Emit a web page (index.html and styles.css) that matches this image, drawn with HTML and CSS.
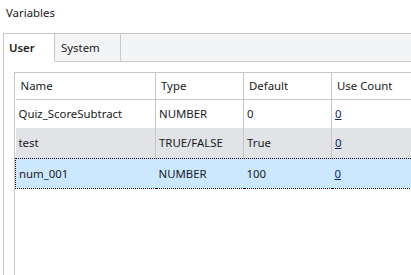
FILE: index.html
```html
<!DOCTYPE html>
<html lang="en">
<head>
  <meta charset="UTF-8" />
  <title>Variables</title>
  <link rel="stylesheet" href="styles.css">
</head>
<body>
  <div class="title">Variables</div>

  <div class="tabs">
    <div class="tabstrip">
      <div class="tab active">User</div>
      <div class="tab">System</div>
      <div class="tab-fill"></div>
    </div>

    <div class="panel">
      <div class="grid">
        <table>
          <colgroup>
            <col class="c-name">
            <col class="c-type">
            <col class="c-default">
            <col class="c-count">
          </colgroup>
          <thead>
            <tr>
              <th>Name</th>
              <th>Type</th>
              <th>Default</th>
              <th>Use Count</th>
            </tr>
          </thead>
          <tbody>
            <tr>
              <td>Quiz_ScoreSubtract</td>
              <td>NUMBER</td>
              <td>0</td>
              <td><a href="#">0</a></td>
            </tr>
            <tr class="hover">
              <td>test</td>
              <td>TRUE/FALSE</td>
              <td>True</td>
              <td><a href="#">0</a></td>
            </tr>
            <tr class="selected">
              <td>num_001</td>
              <td>NUMBER</td>
              <td>100</td>
              <td><a href="#">0</a></td>
            </tr>
          </tbody>
        </table>
      </div>
    </div>
  </div>
</body>
</html>
```

FILE: styles.css
```css
* {
  box-sizing: border-box;
  font-family: 'Noto Sans', 'Segoe UI', sans-serif;
}

html, body {
  margin: 0;
  padding: 0;
  height: 275px;
  overflow: hidden;
  background-color: #fff;
  color: #1a1a1a;
  font-size: 11.4px;
}

body {
  display: flex;
  flex-direction: column;
  width: 411px;
}

.title {
  height: 33px;
  padding: 4px 6px;
  line-height: 17px;
}

.tabs {
  flex: 1;
  display: flex;
  flex-direction: column;
  margin-left: 3px;
  border-left: 1px solid #c8c8c8;
}

.tabstrip {
  display: flex;
  height: 29px;
  border-top: 1px solid #c8c8c8;
  background-color: #f3f4f6;
}

.tab {
  width: 66px;
  padding: 0 6px;
  line-height: 27px;
  border-right: 1px solid #c8c8c8;
  border-bottom: 1px solid #c8c8c8;
}

.tab.active {
  width: 51px;
  padding-left: 5px;
  font-weight: 600;
  background-color: #fff;
  border-bottom-color: #fff;
}

.tab-fill {
  flex: 1;
  border-bottom: 1px solid #c8c8c8;
}

.panel {
  flex: 1;
  display: flex;
  padding: 10px 0 0 10px;
}

.grid {
  flex: 1;
  border-left: 1px solid #c8c8c8;
  border-top: 1px solid #c8c8c8;
  overflow: hidden;
}

table {
  border-collapse: collapse;
  table-layout: fixed;
  width: 420px;
}

.c-name { width: 140px; }
.c-type { width: 88px; }
.c-default { width: 88px; }
.c-count { width: 104px; }

th {
  height: 26px;
  padding: 0 0 0 5px;
  text-align: left;
  font-weight: normal;
  border-right: 1px solid #c8c8c8;
  border-bottom: 1px solid #c8c8c8;
}

td {
  height: 29px;
  padding: 0 0 0 3px;
  white-space: nowrap;
  border-right: 1px solid #c8c8c8;
}

tr.hover td {
  height: 30px;
  background-color: #e1e3e6;
}

tr.selected td {
  height: 30px;
  background-color: #cce8ff;
  border-right: none;
  border-top: 1px dotted #000;
  border-bottom: 1px dotted #000;
}

tr.selected td:first-child {
  border-left: 1px dotted #000;
}

a {
  color: #0a246a;
}
```
